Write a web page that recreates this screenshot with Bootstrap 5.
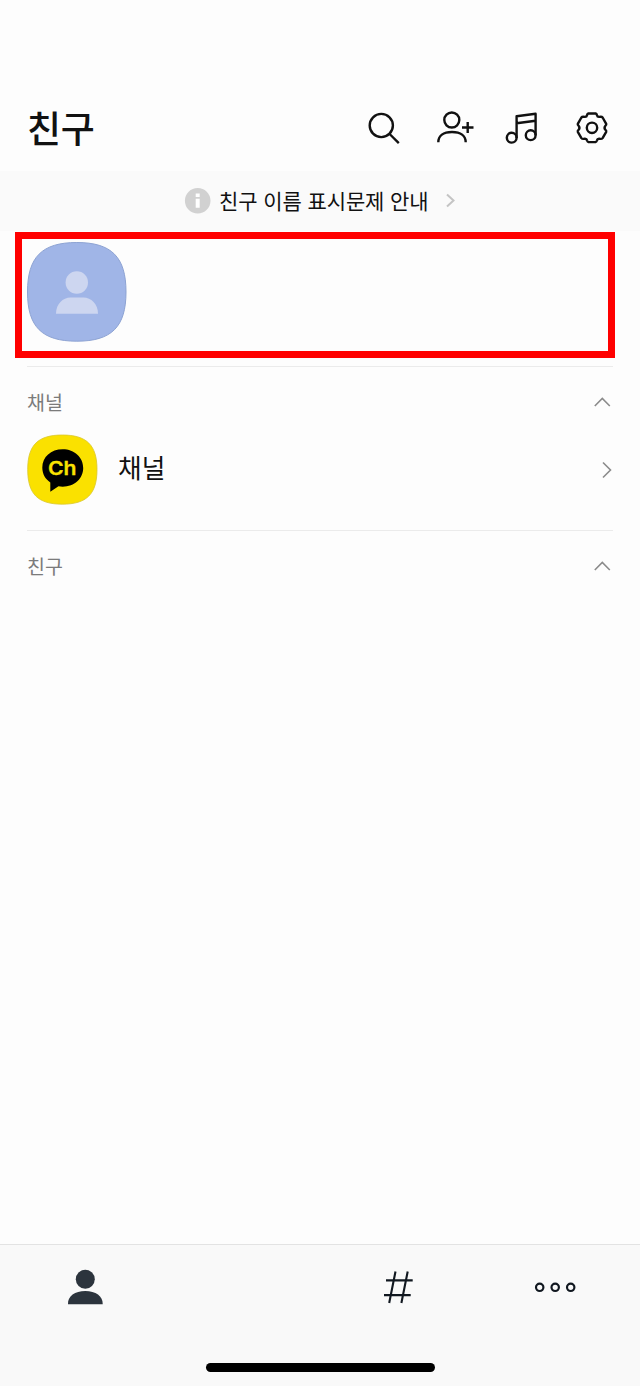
<!DOCTYPE html>
<html lang="ko">
<head>
<meta charset="utf-8">
<meta name="viewport" content="width=device-width, initial-scale=1">
<title>친구</title>
<link rel="stylesheet" href="https://cdn.jsdelivr.net/npm/bootstrap@5.3.0/dist/css/bootstrap.min.css">
<style>
body { background: #fdfdfd; color: #111; font-family: "Noto Sans CJK KR", sans-serif; }
svg { display: block; flex: none; }
.line-icon { fill: none; stroke: #111; stroke-width: 2.4; }
.app { height: 1386px; }
.app-head { height: 171px; padding: 87px 30px 0 27px; }
.app-head h1 { font-size: 37px; line-height: 80px; font-weight: 500; letter-spacing: -.3px; }
.app-head nav { margin-top: 21px; }
.notice { height: 60px; background: #fafafa; font-size: 21px; padding-left: 184px; }
.notice span { line-height: 60px; margin: -2px 0 0 8px; letter-spacing: -.1px; }
.notice .chev { margin-left: 16px; }
.profile { height: 126px; margin: 1px 25px 0 15px; border: 7px solid #f00; padding: 2px 0 0 4px; }
.section-block { margin: 0 27px; border-top: 1px solid #ebebeb; }
.section-block.channels { margin-top: 8px; height: 164px; }
.section-head { padding: 20px 1px 0 0; }
.section-title { font-size: 19.5px; line-height: 30px; color: #7b7b7b; }
.channel-row { margin-top: 17px; }
.channel-name { font-size: 25.7px; line-height: 36px; margin: -7px 0 0 19px; }
.tabs-bar { height: 142px; background: #f9f9f9; border-top: 1px solid #e3e3e3; }
.tab-row { height: 84px; padding: 0 60px 0 65px; }
.tab-row .hash { margin-left: 158px; }
.home-bar { width: 229px; height: 9px; border-radius: 5px; background: #000; margin-top: 34px; }
</style>
</head>
<body>
<div class="app d-flex flex-column overflow-hidden">
  <header class="app-head d-flex align-items-start justify-content-between">
    <h1 class="m-0">친구</h1>
    <nav class="d-flex">
      <svg class="line-icon" width="70" height="40" viewBox="365 108 70 40"><circle cx="381.3" cy="125.500" r="11.600"/><path d="M389.600 134l9.200 9.200"/></svg>
      <svg class="line-icon" width="70" height="40" viewBox="435 108 70 40"><circle cx="451.800" cy="120" r="7.500"/><path d="M438.300 142.300c0-6.500 5-10.300 13.700-10.300s13.700 3.800 13.700 10.300M462 127.500h11.500M467.700 122v11"/></svg>
      <svg class="line-icon" width="70" height="40" viewBox="505 108 70 40" stroke-linejoin="round"><circle cx="511.700" cy="137.700" r="4.900"/><circle cx="530.700" cy="135.200" r="4.900"/><path d="M516.600 138v-21.700l19-2.500v21.500M516.600 123.200l19-2.500"/></svg>
      <svg class="line-icon" width="35" height="40" viewBox="575 108 35 40" stroke-linejoin="round"><g transform="translate(592 127.800)"><circle r="5.200"/><path d="M-3.600-14.300H3.600Q4.600-14.100 5-12.500Q5.300-10.800 7.200-10.900Q9.700-11.500 10.600-10.300L14.200-4Q14.600-3 13.300-1.900Q11.800 0 13.300 1.900Q14.600 3 14.200 4L10.600 10.300Q9.700 11.500 7.200 10.900Q5.300 10.800 5 12.500Q4.600 14.100 3.600 14.300H-3.600Q-4.600 14.100-5 12.500Q-5.300 10.800-7.200 10.900Q-9.700 11.500-10.600 10.300L-14.200 4Q-14.600 3-13.300 1.900Q-11.800 0-13.300-1.900Q-14.600-3-14.200-4L-10.600-10.300Q-9.700-11.500-7.200-10.900Q-5.300-10.800-5-12.500Q-4.600-14.100-3.600-14.300Z"/></g></svg>
    </nav>
  </header>

  <div class="notice d-flex align-items-center">
    <svg width="27" height="27" viewBox="0 0 27 27"><circle cx="13.700" cy="12.800" r="12.800" fill="#d1d1d1"/><path d="M11.700 5.500h4V9h-4zM11.700 10.800h4v9h-4z" fill="#fff"/></svg>
    <span>친구 이름 표시문제 안내</span>
    <svg class="chev" width="12" height="16" viewBox="0 0 12 16" fill="none" stroke="#c4c4c4" stroke-width="2"><path d="M2 1.500l6.500 6L2 13.500"/></svg>
  </div>

  <section class="profile">
    <svg width="102" height="102" viewBox="26 241 102 102"><path d="M27.500 292C27.500 257 42 242.500 76.800 242.500S126 257 126 292S111.500 341.200 76.800 341.200S27.500 327 27.500 292Z" fill="#a0b5e7" stroke="#8da3d3"/><circle cx="76.800" cy="282.500" r="11.200" fill="#cdd6f0"/><path d="M56 313.800C56 304 63 297.500 70.500 297.500H83.500C91 297.500 98 304 98 313.800Z" fill="#cdd6f0"/></svg>
  </section>

  <section class="section-block channels">
    <div class="section-head d-flex align-items-center justify-content-between">
      <span class="section-title">채널</span>
      <svg width="20" height="14" viewBox="592 396 20 14" fill="none" stroke="#8b8b8b" stroke-width="1.600"><path d="M594.800 407l7.500-7.500 7.500 7.500"/></svg>
    </div>
    <div class="channel-row d-flex align-items-center">
      <svg width="72" height="72" viewBox="27 434 72 72"><path d="M27.700 469.500C27.700 445 38 435 62.300 435S97 445 97 469.500S86.800 504.200 62.300 504.200S27.700 494 27.700 469.500Z" fill="#fae100" stroke="#d9c62c" stroke-width=".8"/><path d="M62.700 449.300C51 449.300 42.300 457 42.300 467.500C42.300 474 45.300 479 50.300 482.500V491.800L58.500 486.300Q60.500 486.700 62.700 486.700C74.500 486.700 83.200 478.500 83.200 468S74.500 449.300 62.700 449.300Z" fill="#000"/><text x="62.300" y="474.800" text-anchor="middle" font-family="Inter, sans-serif" font-weight="600" font-size="19" textLength="28.500" lengthAdjust="spacingAndGlyphs" fill="#fae100" stroke="#fae100" stroke-width=".3">Ch</text></svg>
      <span class="channel-name">채널</span>
      <svg class="ms-auto" width="14" height="20" viewBox="599.500 459.500 14 20" fill="none" stroke="#8b8b8b" stroke-width="1.600"><path d="M603.500 462l7.500 7.500-7.500 7.500"/></svg>
    </div>
  </section>

  <section class="section-block">
    <div class="section-head d-flex align-items-center justify-content-between">
      <span class="section-title">친구</span>
      <svg width="20" height="14" viewBox="592 396 20 14" fill="none" stroke="#8b8b8b" stroke-width="1.600"><path d="M594.800 407l7.500-7.500 7.500 7.500"/></svg>
    </div>
  </section>

  <footer class="tabs-bar mt-auto">
    <div class="tab-row d-flex align-items-center justify-content-between">
      <svg width="40" height="40" viewBox="65 1267 40 40" fill="#2c343d"><circle cx="85.300" cy="1279.300" r="9.500"/><path d="M68 1304.300C67.500 1296 75 1291 85.300 1291S103 1296 102.700 1304.300Z"/></svg>
      <svg class="hash" width="34" height="40" viewBox="381 1267 34 40" fill="none" stroke="#111820" stroke-width="2.100"><path d="M395.500 1271.500l-6.300 31.500M407.700 1271.500l-6.300 31.500M386 1280.400h26.700M384 1295.100h26.700"/></svg>
      <svg width="48" height="20" viewBox="532 1277 48 20" fill="none" stroke="#111820" stroke-width="2.200"><circle cx="539.700" cy="1287.300" r="3.700"/><circle cx="555.200" cy="1287.300" r="3.700"/><circle cx="570.700" cy="1287.300" r="3.700"/></svg>
    </div>
    <div class="home-bar mx-auto"></div>
  </footer>
</div>
<script src="https://cdn.jsdelivr.net/npm/bootstrap@5.3.0/dist/js/bootstrap.bundle.min.js"></script>
</body>
</html>
